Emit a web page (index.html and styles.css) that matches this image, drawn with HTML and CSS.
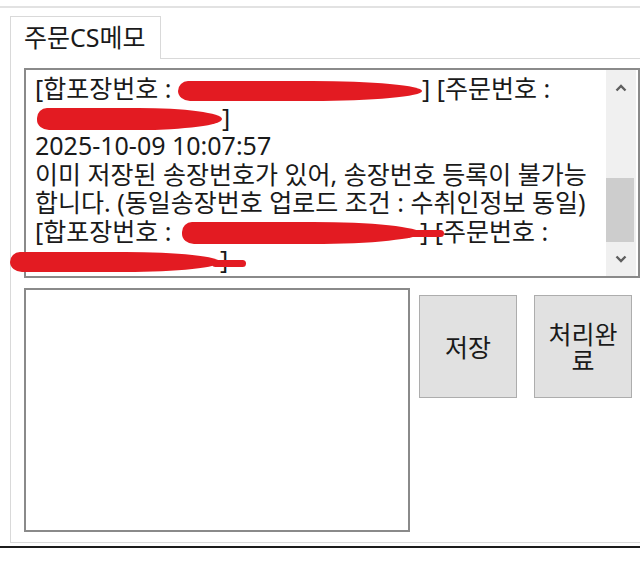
FILE: index.html
```html
<!DOCTYPE html>
<html lang="ko">
<head>
  <meta charset="UTF-8" />
  <title>주문CS메모</title>
  <link rel="stylesheet" href="styles.css">
</head>
<body>
  <div class="window">
    <div class="topline"></div>

    <div class="tabs">
      <div class="tab">주문CS메모</div>
    </div>

    <div class="panel">
      <div class="memo">
        <div class="memo-text">
          <div class="line">[합포장번호 : <span class="redact r1"></span>] [주문번호 :</div>
          <div class="line"><span class="redact r2"></span>]</div>
          <div class="line">2025-10-09 10:07:57</div>
          <div class="line">이미 저장된 송장번호가 있어, 송장번호 등록이 불가능</div>
          <div class="line">합니다. (동일송장번호 업로드 조건 : 수취인정보 동일)</div>
          <div class="line">[합포장번호 : <span class="redact r3 tail"></span>] [주문번호 :</div>
          <div class="line"><span class="redact r4 tail"></span>]</div>
        </div>
        <div class="scrollbar">
          <div class="sb-btn">
            <svg width="12" height="9" viewBox="0 0 12 9"><polyline points="1.5,7.5 6,3 10.5,7.5" fill="none" stroke="#5f5f5f" stroke-width="2.4"/></svg>
          </div>
          <div class="sb-track"><div class="sb-thumb"></div></div>
          <div class="sb-btn">
            <svg width="12" height="9" viewBox="0 0 12 9"><polyline points="1.5,1.5 6,6 10.5,1.5" fill="none" stroke="#5f5f5f" stroke-width="2.4"/></svg>
          </div>
        </div>
      </div>

      <div class="edit-row">
        <div class="input-box"></div>
        <button class="btn btn-save">저장</button>
        <button class="btn btn-done">처리완<br>료</button>
      </div>
    </div>

    <div class="bottomline"></div>
  </div>
</body>
</html>
```

FILE: styles.css
```css
body {
  margin: 0;
  background: #fff;
  color: #1a1a1a;
  font-family: "Noto Sans", "Noto Sans CJK KR", sans-serif;
  font-size: 25px;
}

.window {
  width: 640px;
  height: 575px;
  overflow: hidden;
}

.topline {
  margin-top: 6px;
  height: 2px;
  background: #e2e2e2;
}

.tabs {
  display: flex;
  margin-top: 8px;
  padding-left: 10px;
}

.tab {
  position: relative;
  z-index: 1;
  width: 136px;
  height: 42px;
  margin-bottom: -1px;
  padding-left: 13px;
  line-height: 41px;
  background: #fff;
  border: 1px solid #d9d9d9;
  border-bottom: none;
}

.panel {
  width: 660px;
  margin-left: 10px;
  padding: 9px 0 10px 13px;
  border: 1px solid #d9d9d9;
  box-sizing: border-box;
}

.memo {
  display: flex;
  width: 616px;
  height: 210px;
  border: 2px solid #8a8a8a;
  box-sizing: border-box;
  background: #fff;
}

.memo-text {
  flex: 1;
  padding: 4px 0 0 9px;
  line-height: 28.5px;
}

.line {
  white-space: nowrap;
}

.redact {
  display: inline-block;
  position: relative;
  height: 20px;
  vertical-align: -3px;
  background: #e31b22;
  border-radius: 10px 45% 45% 12px / 10px 50% 50% 10px;
}

.r1 { width: 244px; margin-left: 0; }
.r2 { width: 185px; margin-left: 2px; height: 22px; }
.r3 { width: 238px; margin-left: 4px; height: 22px; }
.r4 { width: 210px; margin-left: -25px; height: 20px; }

.tail::after {
  content: "";
  position: absolute;
  left: 96%;
  top: 8px;
  width: 34px;
  height: 7px;
  background: #e31b22;
  border-radius: 4px;
}

.scrollbar {
  display: flex;
  flex-direction: column;
  width: 30px;
  margin-right: 2px;
  background: #f0f0f0;
}

.sb-btn {
  display: flex;
  align-items: center;
  justify-content: center;
  height: 34px;
}

.sb-track {
  flex: 1;
  display: flex;
  flex-direction: column;
  justify-content: flex-end;
}

.sb-thumb {
  height: 64px;
  margin: 0 2px 0 0;
  background: #cdcdcd;
}

.edit-row {
  display: flex;
  align-items: flex-start;
  margin-top: 10px;
}

.input-box {
  width: 386px;
  height: 244px;
  border: 2px solid #8a8a8a;
  box-sizing: border-box;
  background: #fff;
}

.btn {
  width: 98px;
  height: 103px;
  margin-top: 7px;
  padding: 0;
  font: inherit;
  line-height: 26px;
  color: #1a1a1a;
  background: #e1e1e1;
  border: 1px solid #adadad;
}

.btn-save { margin-left: 9px; }
.btn-done { margin-left: 17px; }

.bottomline {
  margin-top: 3px;
  height: 2px;
  background: #1c1c1c;
}
```
